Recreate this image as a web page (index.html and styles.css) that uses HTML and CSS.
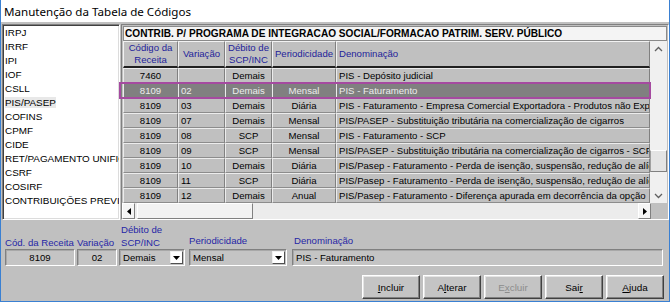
FILE: index.html
```html
<!DOCTYPE html>
<html lang="pt-BR">

<head>
  <meta charset="UTF-8" />
  <title>Manutenção da Tabela de Códigos</title>
  <link rel="stylesheet" href="styles.css">
</head>

<body>
  <div class="window">
    <div class="titlebar">Manutenção da Tabela de Códigos</div>
    <div class="client">
      <div class="top">
        <ul class="taxlist">
          <li>IRPJ</li>
          <li>IRRF</li>
          <li>IPI</li>
          <li>IOF</li>
          <li>CSLL</li>
          <li><span class="picked">PIS/PASEP</span></li>
          <li>COFINS</li>
          <li>CPMF</li>
          <li>CIDE</li>
          <li>RET/PAGAMENTO UNIFICADO</li>
          <li>CSRF</li>
          <li>COSIRF</li>
          <li>CONTRIBUIÇÕES PREVIDENCIÁRIAS</li>
        </ul>

        <div class="gridpanel">
          <div class="caption">CONTRIB. P/ PROGRAMA DE INTEGRACAO SOCIAL/FORMACAO PATRIM. SERV. PÚBLICO</div>
          <div class="gridbody">
            <div class="gridview">
              <table class="grid">
                <colgroup>
                  <col class="c-cod">
                  <col class="c-var">
                  <col class="c-deb">
                  <col class="c-per">
                  <col>
                </colgroup>
                <thead>
                  <tr>
                    <th>Código da<br>Receita</th>
                    <th>Variação</th>
                    <th>Débito de<br>SCP/INC</th>
                    <th>Periodicidade</th>
                    <th class="left">Denominação</th>
                  </tr>
                </thead>
                <tbody>
                  <tr>
                    <td>7460</td><td class="left"></td><td>Demais</td><td></td>
                    <td class="left">PIS - Depósito judicial</td>
                  </tr>
                  <tr class="current">
                    <td>8109</td><td class="left">02</td><td>Demais</td><td>Mensal</td>
                    <td class="left">PIS - Faturamento</td>
                  </tr>
                  <tr>
                    <td>8109</td><td class="left">03</td><td>Demais</td><td>Diária</td>
                    <td class="left">PIS - Faturamento - Empresa Comercial Exportadora - Produtos não Exportados</td>
                  </tr>
                  <tr>
                    <td>8109</td><td class="left">07</td><td>Demais</td><td>Mensal</td>
                    <td class="left">PIS/PASEP - Substituição tributária na comercialização de cigarros</td>
                  </tr>
                  <tr>
                    <td>8109</td><td class="left">08</td><td>SCP</td><td>Mensal</td>
                    <td class="left">PIS - Faturamento - SCP</td>
                  </tr>
                  <tr>
                    <td>8109</td><td class="left">09</td><td>SCP</td><td>Mensal</td>
                    <td class="left">PIS/PASEP - Substituição tributária na comercialização de cigarros - SCP</td>
                  </tr>
                  <tr>
                    <td>8109</td><td class="left">10</td><td>Demais</td><td>Diária</td>
                    <td class="left">PIS/Pasep - Faturamento - Perda de isenção, suspensão, redução de alíquota</td>
                  </tr>
                  <tr>
                    <td>8109</td><td class="left">11</td><td>SCP</td><td>Diária</td>
                    <td class="left">PIS/Pasep - Faturamento - Perda de isenção, suspensão, redução de alíquota</td>
                  </tr>
                  <tr>
                    <td>8109</td><td class="left">12</td><td>Demais</td><td>Anual</td>
                    <td class="left">PIS/Pasep - Faturamento - Diferença apurada em decorrência da opção</td>
                  </tr>
                </tbody>
              </table>
            </div>
            <div class="vscroll">
              <div class="vbtn">
                <svg width="9" height="6" viewBox="0 0 9 6"><polyline points="1,5 4.5,1.5 8,5" fill="none" stroke="#606060" stroke-width="1.3"/></svg>
              </div>
              <div class="vtrack"><div class="vthumb"></div></div>
              <div class="vbtn">
                <svg width="9" height="6" viewBox="0 0 9 6"><polyline points="1,1 4.5,4.5 8,1" fill="none" stroke="#606060" stroke-width="1.3"/></svg>
              </div>
            </div>
          </div>
          <div class="hscrollrow">
            <div class="hscroll">
              <div class="hbtn">
                <svg width="4" height="7" viewBox="0 0 4 7"><polygon points="4,0 0,3.5 4,7" fill="#000"/></svg>
              </div>
              <div class="hthumb"></div>
              <div class="htrack"></div>
              <div class="hbtn">
                <svg width="4" height="7" viewBox="0 0 4 7"><polygon points="0,0 4,3.5 0,7" fill="#000"/></svg>
              </div>
            </div>
            <div class="corner"></div>
          </div>
        </div>

        <div class="rowmark"></div>
      </div>

      <div class="fields">
        <div class="field f-cod">
          <label>Cód. da Receita</label>
          <div class="edit center">8109</div>
        </div>
        <div class="field f-var">
          <label>Variação</label>
          <div class="edit center">02</div>
        </div>
        <div class="field f-deb">
          <label class="indent">Débito de<br>SCP/INC</label>
          <div class="combo">
            <span>Demais</span>
            <span class="drop"><svg width="7" height="4" viewBox="0 0 7 4"><polygon points="0,0 7,0 3.5,4" fill="#000"/></svg></span>
          </div>
        </div>
        <div class="field f-per">
          <label class="raised">Periodicidade</label>
          <div class="combo">
            <span>Mensal</span>
            <span class="drop"><svg width="7" height="4" viewBox="0 0 7 4"><polygon points="0,0 7,0 3.5,4" fill="#000"/></svg></span>
          </div>
        </div>
        <div class="field f-den">
          <label class="raised indent">Denominação</label>
          <div class="edit">PIS - Faturamento</div>
        </div>
      </div>

      <div class="buttons">
        <button><u>I</u>ncluir</button>
        <button>A<u>l</u>terar</button>
        <button class="disabled">E<u>x</u>cluir</button>
        <button>Sai<u>r</u></button>
        <button><u>A</u>juda</button>
      </div>
    </div>
  </div>
</body>

</html>
```

FILE: styles.css
```css
body {
  margin: 0;
  font-family: "Liberation Sans", Arial, sans-serif;
  font-size: 9.6px;
  color: #000;
}

.window {
  width: 670px;
  height: 302px;
  box-sizing: border-box;
  border: 1px solid #3a80d2;
  border-top: none;
  display: flex;
  flex-direction: column;
  background-color: #c0c0c0;
}

.titlebar {
  height: 22px;
  line-height: 23px;
  padding-left: 3px;
  background-color: #fff;
  font-family: "Noto Sans", sans-serif;
  font-size: 11.6px;
}

.client {
  flex: 1;
  display: flex;
  flex-direction: column;
  padding: 2px 0 0 1px;
}

.top {
  display: flex;
  gap: 1px;
  height: 196px;
  position: relative;
}

/* list of taxes on the left */
.taxlist {
  list-style-type: none;
  margin: 0;
  width: 118px;
  box-sizing: border-box;
  padding: 1px 0 0 2px;
  font-size: 9.9px;
  background-color: #fff;
  border: 1px solid;
  border-color: #808080 #fff #fff #808080;
  box-shadow: inset 1px 1px 0 #404040, inset -1px -1px 0 #dcdcdc;
  overflow: hidden;
  white-space: nowrap;
}

.taxlist li {
  height: 14px;
  line-height: 14px;
}

.taxlist .picked {
  background-color: #e8e8e8;
}

/* grid */
.gridpanel {
  flex: 1;
  display: flex;
  flex-direction: column;
  border: 1px solid;
  border-color: #808080 #fff #fff #808080;
}

.caption {
  height: 15px;
  box-sizing: border-box;
  margin: 1px 1px 0;
  padding-left: 1px;
  line-height: 13px;
  font-size: 10.1px;
  font-weight: bold;
  background-color: #f4f4f4;
  border: 1px solid #8a8a8a;
  white-space: nowrap;
  overflow: hidden;
}

.gridbody {
  display: flex;
  height: 162px;
  padding-left: 1px;
}

.gridview {
  width: 527px;
  overflow: hidden;
}

.grid {
  width: 527px;
  table-layout: fixed;
  border-collapse: separate;
  border-spacing: 0;
}

.grid .c-cod { width: 55px; }
.grid .c-var { width: 47px; }
.grid .c-deb { width: 47px; }
.grid .c-per { width: 64px; }

.grid th {
  height: 27px;
  box-sizing: border-box;
  padding: 0;
  font-weight: normal;
  line-height: 12px;
  color: #1e1e9a;
  background-color: #c0c0c0;
  border-top: 1px solid #f2f2f2;
  border-left: 1px solid #f2f2f2;
  border-right: 1px solid #808080;
  border-bottom: 2px solid #202020;
}

.grid td {
  height: 15px;
  box-sizing: border-box;
  padding: 0;
  line-height: 13px;
  text-align: center;
  white-space: nowrap;
  overflow: hidden;
  background-color: #c0c0c0;
  border-top: 1px solid #ececec;
  border-left: 1px solid #ececec;
  border-right: 1px solid #808080;
  border-bottom: 1px solid #8c8c8c;
}

.grid .left {
  text-align: left;
  padding-left: 2px;
}

.grid tr.current td {
  background-color: #808080;
  color: #ececec;
}

.rowmark {
  position: absolute;
  left: 117px;
  top: 58px;
  width: 532px;
  height: 17px;
  box-sizing: border-box;
  border: 2px solid #a54aa0;
}

.vscroll {
  width: 17px;
  display: flex;
  flex-direction: column;
  background-color: #f0f0f0;
}

.vbtn {
  height: 15px;
  display: flex;
  align-items: center;
  justify-content: center;
}

.vtrack {
  flex: 1;
}

.vthumb {
  margin-top: 94px;
  height: 22px;
  background-color: #e4e4e4;
  border: 1px solid;
  border-color: #fff #808080 #808080 #a0a0a0;
  box-sizing: border-box;
}

.hscrollrow {
  display: flex;
  height: 16px;
}

.hscroll {
  flex: 1;
  display: flex;
  background-color: #ececec;
}

.hbtn {
  width: 13px;
  display: flex;
  align-items: center;
  justify-content: center;
  box-sizing: border-box;
  background-color: #f4f4f4;
  border: 1px solid;
  border-color: #fff #808080 #808080 #fff;
}

.hthumb {
  width: 116px;
  margin-left: 2px;
  background-color: #f2f2f2;
  border: 1px solid;
  border-color: #fff #808080 #808080 #fff;
  box-sizing: border-box;
}

.htrack {
  flex: 1;
}

.corner {
  width: 17px;
}

/* edit fields under the grid */
.fields {
  display: flex;
  align-items: flex-end;
  margin: 3px 0 0 3px;
}

.field {
  display: flex;
  flex-direction: column;
}

.field label {
  line-height: 13px;
  color: #2626a6;
  white-space: nowrap;
}

.field label.indent {
  padding-left: 2px;
}

.field label.raised {
  margin-bottom: 2px;
}

.f-cod { width: 70px; }
.f-var { width: 40px; margin-left: 2px; }
.f-deb { width: 66px; margin-left: 2px; }
.f-per { width: 98px; margin-left: 4px; }
.f-den { width: 371px; margin-left: 5px; }

.edit,
.combo {
  height: 17px;
  box-sizing: border-box;
  line-height: 15px;
  padding-left: 3px;
  border: 1px solid;
  border-color: #808080 #fff #fff #808080;
  box-shadow: inset 1px 1px 0 #a8a8a8;
  background-color: #c4c4c4;
  white-space: nowrap;
  overflow: hidden;
}

.edit.center {
  text-align: center;
  padding-left: 0;
}

.combo {
  display: flex;
  justify-content: space-between;
  align-items: center;
  padding-right: 1px;
}

.drop {
  width: 13px;
  height: 13px;
  box-sizing: border-box;
  display: flex;
  align-items: center;
  justify-content: center;
  background-color: #fff;
  border: 1px solid;
  border-color: #f0f0f0 #505050 #505050 #f0f0f0;
}

/* buttons */
.buttons {
  display: flex;
  justify-content: flex-end;
  gap: 3px;
  margin-top: 9px;
  padding-right: 5px;
}

.buttons button {
  width: 58px;
  height: 24px;
  padding: 0;
  font-family: "Liberation Sans", Arial, sans-serif;
  font-size: 9.9px;
  color: #000;
  background-color: #c4c4c4;
  border: 1px solid;
  border-color: #fff #404040 #404040 #fff;
  box-shadow: inset -1px -1px 0 #808080, inset 1px 1px 0 #e4e4e4;
}

.buttons button u {
  text-decoration: underline;
}

.buttons button.disabled {
  color: #8c8c8c;
}
```
